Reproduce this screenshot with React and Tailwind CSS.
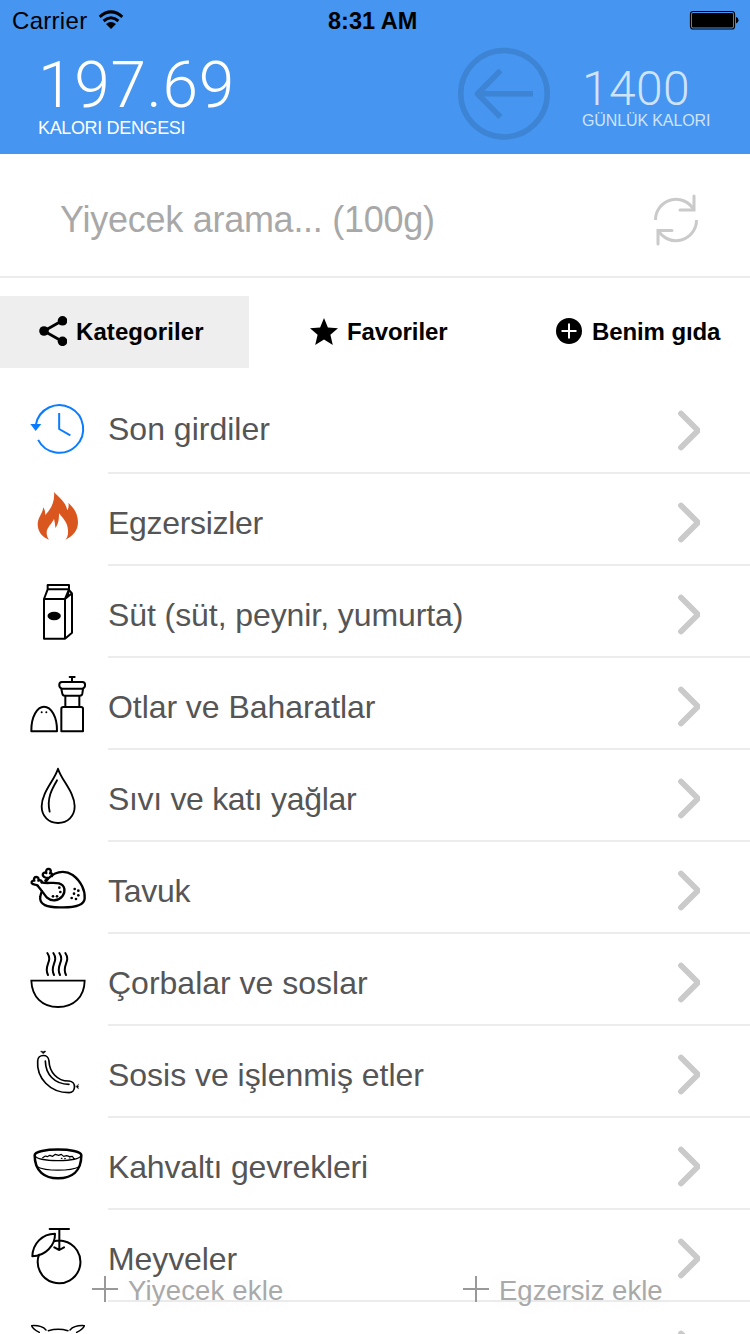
import React from "react";

const stroke = (color, width) => ({
  fill: "none",
  stroke: color,
  strokeWidth: width,
  strokeLinecap: "round",
  strokeLinejoin: "round",
});

function RowIcon({ top, children }) {
  return (
    <svg className="h-[90px] w-[60px] shrink-0" viewBox={`24 ${top} 180 270`} {...stroke("#000", 6)}>
      {children}
    </svg>
  );
}

const History = () => (
  <RowIcon top={-24}>
    <g stroke="#0a7cff" strokeWidth="6" strokeLinecap="butt">
      <path d="M47.700 104A71.500 71.500 0 1 1 54.500 149.500" />
      <path d="M117.500 69V117L151 136" strokeLinejoin="miter" />
      <path d="M31 102H64L47 123Z" fill="#0a7cff" stroke="none" />
    </g>
  </RowIcon>
);

const Flame = () => (
  <RowIcon top={252}>
    <path
      d="M102 306C116 322 137 335 142 361C146 354 147 346 145 338C160 352 174 370 174 397C174 420 160 438 137 449C143 441 146 430 143 413C140 394 127 383 117 370C117 386 116 403 106 414C106 406 104 396 102 387C95 402 80 413 80 428C80 437 83 443 87 449C66 441 53 425 53 402C54 382 68 370 70 352C74 359 77 367 75 376C93 357 105 336 102 306Z"
      fill="#d9571f"
      stroke="none"
    />
  </RowIcon>
);

const Milk = () => (
  <RowIcon top={-12}>
    <path d="M72 87H135V206H72ZM72 87L83 58H147L135 87M83 58V45H147V58M147 60L156 70V188L135 206M135 87L156 70M147 60L143 76" />
    <ellipse cx="102.500" cy="138" rx="20" ry="12.500" fill="#000" stroke="none" />
  </RowIcon>
);

const Spices = () => (
  <RowIcon top={264}>
    <path d="M34 484C33 440 52 410 72 410C93 410 112 440 111 484Z" />
    <path d="M124 484V416Q124 411 130 411H183Q189 411 189 416V484ZM136 411V378M178 411V378M134 377H180Q186 377 187 371L189 357M124 357L127 371Q128 377 134 377M126 336H187C198 336 198 354 187 356H126C115 354 115 336 126 336ZM156 335V322M149 321H164" />
    <g fill="#000" stroke="none">
      <circle cx="65" cy="427" r="3" />
      <circle cx="79" cy="427" r="3" />
    </g>
  </RowIcon>
);

const Drop = () => (
  <RowIcon top={-15}>
    <path d="M114 41C104 75 65 112 65 154C65 184 86 204 114 204C143 204 164 184 164 154C164 112 124 75 114 41Z" strokeWidth="5.500" />
    <path d="M111 76C97 100 79 130 89 170" strokeWidth="5.500" />
  </RowIcon>
);

const Chicken = () => (
  <RowIcon top={261}>
    <g strokeWidth="7">
      <path d="M79 378C99 350 132 343 158 360C184 379 196 408 194 431C192 455 150 458 119 457C83 457 56 450 61 424C62 418 64 413 66 409" />
      <path d="M53 392C64 405 71 416 81 428C94 440 116 438 127 424C138 409 135 390 117 385C99 381 79 387 65 382" />
      <path d="M53 392C48 387 38 391 35 384C34 379 38 376 43 377C40 370 44 366 49 366C55 366 57 371 55 377C61 374 67 378 65 382" />
      <path d="M76 377L84 369C75 369 66 364 69 356C71 352 76 352 79 354C76 346 81 341 87 342C93 343 94 349 90 355C96 354 99 359 96 363" />
    </g>
    <g fill="#000" stroke="none">
      <circle cx="118" cy="398" r="4" /><circle cx="121" cy="411" r="4" />
      <circle cx="99" cy="424" r="4" /><circle cx="111" cy="424" r="4" /><circle cx="164" cy="402" r="4" />
      <circle cx="175" cy="407" r="4" /><circle cx="162" cy="416" r="4" /><circle cx="175" cy="421" r="4" />
      <circle cx="155" cy="429" r="4" /><circle cx="168" cy="432" r="4" />
    </g>
  </RowIcon>
);

const Soup = () => (
  <RowIcon top={-18}>
    <path d="M34 122H194C193 170 162 201 114 201C66 201 36 170 34 122Z" strokeLinejoin="miter" strokeWidth="5.500" />
    <path d="M82 39C100 65 69 77 84 105M100 39C118 65 87 77 102 105M118 39C136 65 105 77 120 105M136 39C154 65 123 77 138 105" />
  </RowIcon>
);

const Sausage = () => (
  <RowIcon top={258}>
    <g strokeWidth="5">
      <path d="M53 363C53 342 86 340 87 363C88 396 112 424 147 423C170 424 168 458 147 458C90 458 49 414 53 363Z" />
      <path d="M76 363C77 402 102 433 147 433" />
    </g>
    <path d="M62 334L66 333L69 335L73 333L78 334L70 341ZM176 433L174 437L176 440L174 443L176 447L168 440Z" fill="#000" stroke="#000" strokeWidth="1" />
  </RowIcon>
);

const Cereal = () => (
  <RowIcon top={-36}>
    <path d="M44 76C44 124 74 145 114 145C155 145 184 124 184 76C184 53 44 53 44 76Z" strokeWidth="7.500" />
    <g strokeWidth="3.500">
      <path d="M45 77C55 97 173 97 183 77M51 110C78 124 150 124 178 110M68 83L76 78L82 80L89 76L98 79L106 73L116 76L124 73L131 79L140 77L149 80L157 79L163 87" />
      <path d="M124 85H126M134 86H136M148 84H150" />
    </g>
  </RowIcon>
);

const Fruit = () => (
  <RowIcon top={240}>
    <path d="M57 374A64 64 0 1 0 130 333M102 334Q117 330 130 333M89 297H147M118 297V359M103 352L118 360L132 352" />
    <path d="M37 379C38 342 66 311 105 311C106 346 76 378 37 379Z" />
  </RowIcon>
);

const Pig = () => (
  <RowIcon top={516}>
    <path d="M58 607C48 602 38 597 35 587C52 586 70 591 78 600M85 602C103 597 126 597 144 602M170 607C180 602 190 597 193 587C176 586 158 591 150 600" strokeWidth="4.500" />
  </RowIcon>
);

const rows = [
  [History, "Son girdiler", "-translate-y-[2px]"],
  [Flame, "Egzersizler", "tracking-[-0.3px]"],
  [Milk, "Süt (süt, peynir, yumurta)", "tracking-[-0.08px]"],
  [Spices, "Otlar ve Baharatlar", "tracking-[-0.06px]"],
  [Drop, "Sıvı ve katı yağlar", "tracking-[-0.32px]"],
  [Chicken, "Tavuk", "tracking-[-0.3px]"],
  [Soup, "Çorbalar ve soslar", ""],
  [Sausage, "Sosis ve işlenmiş etler", "tracking-[-0.03px]"],
  [Cereal, "Kahvaltı gevrekleri", "tracking-[-0.17px]"],
  [Fruit, "Meyveler", "tracking-[-0.1px]"],
  [Pig, "", ""],
];

function Row({ icon: Icon, label, nudge }) {
  return (
    <div className="flex h-[92px] shrink-0 pl-7">
      <Icon />
      <div className="ml-5 flex flex-1 items-center border-b-2 border-[#ececec]">
        <span className={`flex-1 pt-[7px] text-[32px] leading-[40px] text-[#555] ${nudge}`}>{label}</span>
        <svg className="mt-[8px] mr-12 h-[42px] w-[26px]" viewBox="0 0 26 42" fill="none" stroke="#cacaca" strokeWidth="5.800" strokeLinecap="round">
          <path d="M5 3.500L22 20.500L5 37.500" strokeLinejoin="bevel" />
        </svg>
      </div>
    </div>
  );
}

function Header() {
  return (
    <header className="h-[154px] shrink-0 bg-[#4595f1]">
      <div className="flex h-10 items-center pl-3 pr-[11px] text-[24px] leading-[40px] text-black">
        <div className="flex w-[316px] items-center">
          <span className="pt-[2px] tracking-[0.3px]">Carrier</span>
          <svg className="ml-[11px] h-5 w-[26px]" viewBox="0 0 26 20" fill="none" stroke="#000" strokeWidth="3">
            <path d="M1.700 6.800Q13 -3 24.300 6.800M5.600 11Q13 4.600 20.400 11" />
            <path d="M8 14Q13 10 18 14L13 19Z" fill="#000" stroke="none" />
          </svg>
        </div>
        <span className="pt-[2px] text-[23.500px] font-bold">8:31 AM</span>
        <div className="flex flex-1 justify-end">
          <svg className="h-5 w-[50px]" viewBox="0 0 50 20">
            <rect x="1.500" y="1.500" width="44" height="17.500" rx="2.500" fill="none" stroke="#000" strokeWidth="1.200" />
            <rect x="3" y="3" width="41" height="14.500" rx="1.200" />
            <path d="M47 7Q49.500 7.500 49.500 10.200Q49.500 13 47 13.500Z" />
          </svg>
        </div>
      </div>
      <div className="flex h-[114px] pl-[38px]">
        <div className="w-[420px] text-white">
          <div className="pt-[14px] font-[Roboto,sans-serif] text-[64px] font-light leading-[63px] tracking-[0.7px]">197.69</div>
          <div className="text-[18px] leading-[22px] tracking-[-0.35px]">KALORI DENGESI</div>
        </div>
        <svg className="mt-[7px] h-[94px] w-[94px]" viewBox="0 0 94 94" fill="none" stroke="#3d84d4" strokeWidth="5.500">
          <circle cx="46" cy="46.700" r="43.200" />
          <path d="M75 46.700H20M42.500 23.500L19.500 46.700L42.500 70" strokeLinejoin="round" />
        </svg>
        <div className="ml-[30px] text-[#cfe3fb]">
          <div className="pt-[25px] font-[Roboto,sans-serif] text-[48px] font-light leading-[47px] tracking-[0.4px]">1400</div>
          <div className="text-[16px] leading-[18px] tracking-[-0.12px]">GÜNLÜK KALORI</div>
        </div>
      </div>
    </header>
  );
}

function AddButton({ label, place }) {
  return (
    <div className={`absolute top-[1273px] flex items-center text-[27.500px] leading-[32px] text-[#a9a9a9] [text-shadow:0_0_24px_rgba(0,0,0,0.08)] ${place}`}>
      <svg className="mr-[10px] h-[28px] w-[26px] -translate-y-px" viewBox="0 0 26 28" stroke="#999" strokeWidth="2">
        <path d="M0 14H26M13 1V27" />
      </svg>
      <span className="pt-[2px]">{label}</span>
    </div>
  );
}

export default function App() {
  return (
    <div className="relative flex h-[1334px] w-[750px] flex-col overflow-hidden bg-white font-['Liberation_Sans',Arial,sans-serif]">
      <Header />
      <div className="flex h-[124px] shrink-0 items-center border-b-2 border-[#ececec] pl-[60px] pr-[50px]">
        <span className="flex-1 pt-[9px] text-[36px] leading-[44px] tracking-[-0.26px] text-[#a8a8a8]">Yiyecek arama... (100g)</span>
        <svg className="mt-[9px] h-[54px] w-[48px]" viewBox="0 0 48 54" fill="none" stroke="#cacaca" strokeWidth="3" strokeLinecap="round">
          <path d="M3.500 27A20.500 20.500 0 0 1 42 17M44.500 27A20.500 20.500 0 0 1 6 37" strokeLinecap="butt" />
          <path d="M42 3V17H28M6 51V37.500H20" />
        </svg>
      </div>
      <nav className="mt-[18px] flex h-[72px] shrink-0 text-[24px] font-bold text-black">
        <div className="flex w-[249px] items-center bg-[#eee] pl-[39px]">
          <svg className="mb-[2px] h-[30px] w-[28px]" viewBox="0 0 28 30" stroke="#000" strokeWidth="2.800">
            <path d="M23.500 4.500L5 15L23.500 25.500" fill="none" />
            <circle cx="5" cy="15" r="4.800" stroke="none" />
            <circle cx="23.500" cy="4.800" r="4.800" stroke="none" />
            <circle cx="23.500" cy="25.300" r="4.800" stroke="none" />
          </svg>
          <span className="ml-[9px] tracking-[0.08px]">Kategoriler</span>
        </div>
        <div className="flex w-[250px] items-center pl-[61px]">
          <svg className="mb-px h-[28px] w-[28px]" viewBox="0 0 28 28">
            <path d="M14 0L17.900 9.500L28 10.200L20.400 16.800L22.800 27L14 21.500L5.200 27L7.600 16.800L0 10.200L10.100 9.500Z" />
          </svg>
          <span className="ml-[9px] tracking-[-0.1px]">Favoriler</span>
        </div>
        <div className="flex flex-1 items-center pl-[57px]">
          <svg className="mb-[2px] h-[26px] w-[26px]" viewBox="0 0 26 26">
            <circle cx="13" cy="13" r="13" />
            <path d="M5.500 13H20.500M13 5.500V20.500" stroke="#fff" strokeWidth="2" />
          </svg>
          <span className="ml-[10px] tracking-[-0.1px]">Benim gıda</span>
        </div>
      </nav>
      <main className="flex flex-col pt-[14px]">
        {rows.map(([icon, label, nudge], i) => (
          <Row key={i} icon={icon} label={label} nudge={nudge} />
        ))}
      </main>
      <AddButton label="Yiyecek ekle" place="left-[92px] tracking-[0.17px]" />
      <AddButton label="Egzersiz ekle" place="left-[463px]" />
    </div>
  );
}
